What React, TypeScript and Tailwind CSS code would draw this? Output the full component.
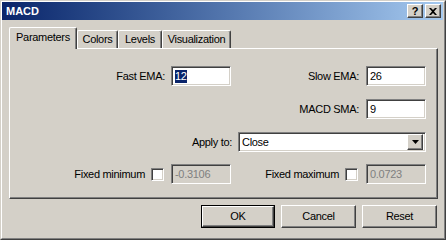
import React from "react";

const font = { fontFamily: '"Liberation Sans", Arial, sans-serif' };

const raised =
  "border border-t-white border-l-white border-r-[#404040] border-b-[#404040] shadow-[inset_-1px_-1px_0_#808080]";
const sunken =
  "border border-t-[#808080] border-l-[#808080] border-r-white border-b-white shadow-[inset_1px_1px_0_#404040,inset_-1px_-1px_0_#d4d0c8]";

const Field = ({ value, disabled, selected }: { value: string; disabled?: boolean; selected?: boolean }) => (
  <div
    className={`${sunken} w-[60px] h-[20px] flex items-center pl-[3px] text-[11px] ${
      disabled ? "bg-[#d4d0c8] text-[#808080]" : "bg-white text-black"
    }`}
  >
    {selected ? <span className="bg-[#0a246a] text-white leading-[13px]">{value}</span> : value}
  </div>
);

const Check = () => <div className={`${sunken} w-[13px] h-[13px] bg-white`} />;

const Tab = ({ label, w, active }: { label: string; w: string; active?: boolean }) => (
  <div
    className={`${w} flex justify-center items-center border-t border-l border-t-white border-l-white border-r border-r-[#404040] shadow-[inset_-1px_0_0_#808080] rounded-t-[2px] bg-[#d4d0c8] ${
      active ? "h-[22px] -mb-px relative z-10 pb-[3px]" : "h-[18px]"
    }`}
  >
    {label}
  </div>
);

const Btn = ({ label, def }: { label: string; def?: boolean }) => (
  <div className={def ? "border border-black" : ""}>
    <div
      className={`${raised} ${def ? "w-[72px] h-[21px]" : "w-[75px] h-[23px]"} flex items-center justify-center text-[11px]`}
    >
      {label}
    </div>
  </div>
);

export default function App() {
  return (
    <div className="w-[446px] h-[240px] bg-[#d4d0c8] text-black text-[11px] tracking-[-0.3px]" style={font}>
      <div className="w-full h-full border border-t-[#d4d0c8] border-l-[#d4d0c8] border-r-[#404040] border-b-[#404040]">
        <div className="w-full h-full border border-t-white border-l-white border-r-[#808080] border-b-[#808080] flex flex-col">
          {/* title bar */}
          <div className="h-[18px] mr-[1px] bg-gradient-to-r from-[#0a246a] to-[#a6caf0] flex items-center pl-[4px] pr-[2px]">
            <span className="text-white font-bold text-[11px] tracking-normal flex-1">MACD</span>
            <div className="flex gap-[2px]">
              <div className={`${raised} bg-[#d4d0c8] w-[16px] h-[14px] flex items-center justify-center font-bold text-[11px] leading-none`}>
                ?
              </div>
              <div className={`${raised} bg-[#d4d0c8] w-[16px] h-[14px] flex items-center justify-center`}>
                <svg width="8" height="7" viewBox="0 0 8 7">
                  <path d="M0 0h2l2 2 2-2h2L5 3.5 8 7H6L4 5 2 7H0l3-3.5z" fill="black" />
                </svg>
              </div>
            </div>
          </div>

          <div className="px-[7px] pt-[7px]">
            {/* tabs */}
            <div className="flex items-end h-[21px]">
              <Tab label="Parameters" w="w-[68px]" active />
              <Tab label="Colors" w="w-[41px]" />
              <Tab label="Levels" w="w-[44px]" />
              <Tab label="Visualization" w="w-[69px]" />
            </div>

            {/* panel */}
            <div className="w-[429px] h-[151px] border-t border-l border-t-white border-l-white border-r border-b border-r-[#404040] border-b-[#404040] shadow-[inset_-1px_-1px_0_#808080] pt-[17px] flex flex-col gap-[13px]">
              <div className="flex h-[20px]">
                <div className="w-[221px] flex justify-end items-center gap-[6px]">
                  <span>Fast EMA:</span>
                  <Field value="12" selected />
                </div>
                <div className="w-[195px] flex justify-end items-center gap-[7px]">
                  <span>Slow EMA:</span>
                  <Field value="26" />
                </div>
              </div>

              <div className="flex h-[20px]">
                <div className="w-[416px] flex justify-end items-center gap-[7px]">
                  <span>MACD SMA:</span>
                  <Field value="9" />
                </div>
              </div>

              <div className="flex h-[20px]">
                <div className="w-[416px] flex justify-end items-center gap-[6px]">
                  <span>Apply to:</span>
                  <div className={`${sunken} w-[188px] h-[20px] bg-white flex items-center pl-[3px] pr-[2px]`}>
                    <span className="flex-1">Close</span>
                    <div className={`${raised} bg-[#d4d0c8] w-[16px] h-[16px] flex items-center justify-center`}>
                      <svg width="7" height="4" viewBox="0 0 7 4">
                        <path d="M0 0h7L3.5 4z" fill="black" />
                      </svg>
                    </div>
                  </div>
                </div>
              </div>

              <div className="flex h-[20px] -mt-px">
                <div className="w-[221px] flex justify-end items-center">
                  <span className="mr-[6px]">Fixed minimum</span>
                  <Check />
                  <div className="ml-[7px]">
                    <Field value="-0.3106" disabled />
                  </div>
                </div>
                <div className="w-[195px] flex justify-end items-center">
                  <span className="mr-[6px]">Fixed maximum</span>
                  <Check />
                  <div className="ml-[8px]">
                    <Field value="0.0723" disabled />
                  </div>
                </div>
              </div>
            </div>

            {/* buttons */}
            <div className="flex justify-end gap-[6px] mt-[6px] w-[429px] pr-[1px]">
              <Btn label="OK" def />
              <Btn label="Cancel" />
              <Btn label="Reset" />
            </div>
          </div>
        </div>
      </div>
    </div>
  );
}
